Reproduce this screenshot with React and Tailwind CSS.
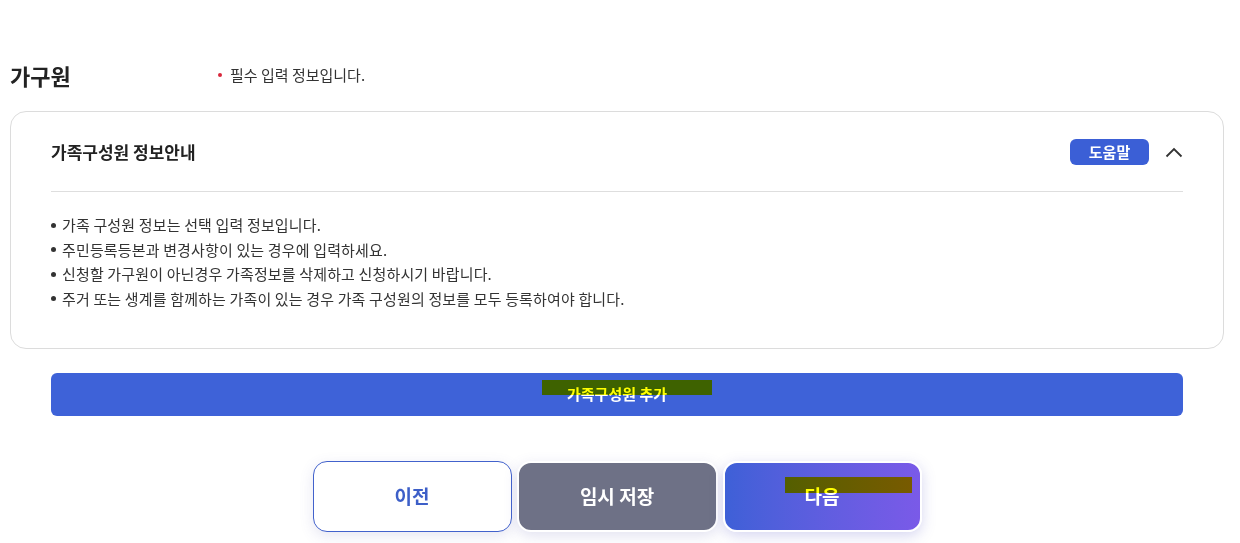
import React from 'react';

const notices = [
  '가족 구성원 정보는 선택 입력 정보입니다.',
  '주민등록등본과 변경사항이 있는 경우에 입력하세요.',
  '신청할 가구원이 아닌경우 가족정보를 삭제하고 신청하시기 바랍니다.',
  '주거 또는 생계를 함께하는 가족이 있는 경우 가족 구성원의 정보를 모두 등록하여야 합니다.',
];

const ChevronUp = () => (
  <svg width="18" height="11" viewBox="0 0 18 11" fill="none">
    <path d="M1.5 9.5L9 2l7.5 7.5" stroke="#333" strokeWidth="1.8" />
  </svg>
);

export default function App() {
  return (
    <div
      className="w-[1240px] h-[543px] overflow-hidden bg-white text-[#333]"
      style={{ fontFamily: '"Noto Sans CJK KR", "Noto Sans", sans-serif' }}
    >
      <div className="pl-[10px] pr-[16px] pt-[58px]">
        {/* section title */}
        <div className="flex items-center h-[34px]">
          <h2 className="w-[208px] text-[22px] font-bold text-[#222]">가구원</h2>
          <p className="flex items-center text-[15px] text-[#333]">
            <span className="w-[4px] h-[4px] rounded-full bg-[#d8283c] mr-[8px]" />
            필수 입력 정보입니다.
          </p>
        </div>

        {/* info card */}
        <div className="mt-[19px] border border-[#dcdcdc] rounded-[16px] px-[40px] pt-[27px] pb-[37px]">
          <div className="flex items-center justify-between pb-[26px] border-b border-[#dedede]">
            <h3 className="text-[17px] font-bold text-[#222]">가족구성원 정보안내</h3>
            <div className="flex items-center gap-[16px]">
              <button className="w-[79px] h-[26px] rounded-[6px] bg-[#3b5fd6] text-white text-[15px] font-bold">
                도움말
              </button>
              <ChevronUp />
            </div>
          </div>
          <ul className="pt-[21px]">
            {notices.map((n) => (
              <li key={n} className="flex items-center h-[24.5px] text-[15px] text-[#333] tracking-[0.15px]">
                <span className="w-[5px] h-[5px] rounded-full bg-[#333] mr-[6px]" />
                {n}
              </li>
            ))}
          </ul>
        </div>

        {/* add member */}
        <div className="px-[41px] mt-[24px]">
          <button className="relative w-full h-[43px] rounded-[6px] bg-[#3e62d8] text-white text-[15px] font-bold">
            가족구성원 추가
            <span className="absolute left-[491px] top-[7px] w-[170px] h-[15px] bg-[#ffff00] mix-blend-multiply" />
          </button>
        </div>

        {/* bottom actions */}
        <div className="flex justify-center gap-[5px] mt-[45px]">
          <button className="w-[199px] h-[71px] rounded-[14px] border border-[#4262cc] bg-white text-[#3d5fc8] text-[19px] font-bold shadow-[0_4px_14px_rgba(90,90,170,0.15)]">
            이전
          </button>
          <button className="w-[201px] h-[71px] rounded-[14px] border-2 border-white bg-[#6e7186] text-white text-[19px] font-bold shadow-[0_4px_14px_rgba(90,90,170,0.18)]">
            임시 저장
          </button>
          <button className="relative w-[199px] h-[71px] rounded-[14px] border-2 border-white bg-gradient-to-r from-[#3e60d7] to-[#7a5ae8] text-white text-[19px] font-bold shadow-[0_4px_14px_rgba(90,90,200,0.25)]">
            다음
            <span className="absolute left-[60px] top-[14px] w-[127px] h-[16px] bg-[#ffff00] mix-blend-multiply" />
          </button>
        </div>
      </div>
    </div>
  );
}
